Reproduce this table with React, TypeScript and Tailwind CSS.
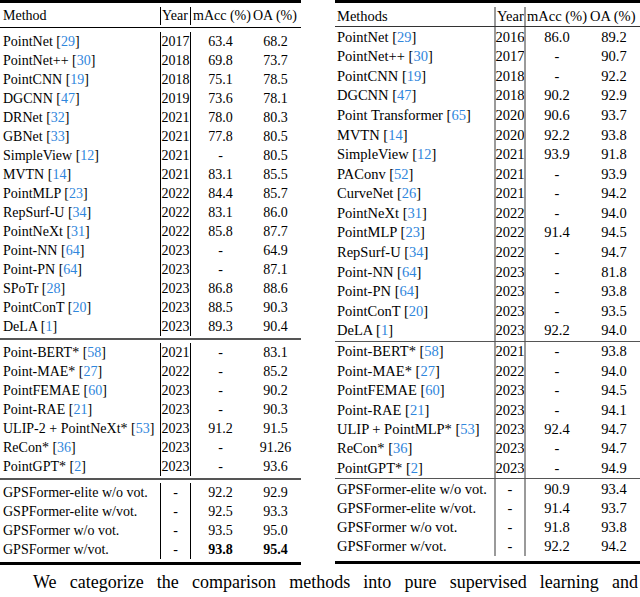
import React from 'react';

type Row = [string, string | null, string, string, string, boolean?];

const leftGroups: Row[][] = [
  [
    ['PointNet', '29', '2017', '63.4', '68.2'],
    ['PointNet++', '30', '2018', '69.8', '73.7'],
    ['PointCNN', '19', '2018', '75.1', '78.5'],
    ['DGCNN', '47', '2019', '73.6', '78.1'],
    ['DRNet', '32', '2021', '78.0', '80.3'],
    ['GBNet', '33', '2021', '77.8', '80.5'],
    ['SimpleView', '12', '2021', '-', '80.5'],
    ['MVTN', '14', '2021', '83.1', '85.5'],
    ['PointMLP', '23', '2022', '84.4', '85.7'],
    ['RepSurf-U', '34', '2022', '83.1', '86.0'],
    ['PointNeXt', '31', '2022', '85.8', '87.7'],
    ['Point-NN', '64', '2023', '-', '64.9'],
    ['Point-PN', '64', '2023', '-', '87.1'],
    ['SPoTr', '28', '2023', '86.8', '88.6'],
    ['PointConT', '20', '2023', '88.5', '90.3'],
    ['DeLA', '1', '2023', '89.3', '90.4'],
  ],
  [
    ['Point-BERT*', '58', '2021', '-', '83.1'],
    ['Point-MAE*', '27', '2022', '-', '85.2'],
    ['PointFEMAE', '60', '2023', '-', '90.2'],
    ['Point-RAE', '21', '2023', '-', '90.3'],
    ['ULIP-2 + PointNeXt*', '53', '2023', '91.2', '91.5'],
    ['ReCon*', '36', '2023', '-', '91.26'],
    ['PointGPT*', '2', '2023', '-', '93.6'],
  ],
  [
    ['GPSFormer-elite w/o vot.', null, '-', '92.2', '92.9'],
    ['GSPFormer-elite w/vot.', null, '-', '92.5', '93.3'],
    ['GPSFormer w/o vot.', null, '-', '93.5', '95.0'],
    ['GPSFormer w/vot.', null, '-', '93.8', '95.4', true],
  ],
];

const rightGroups: Row[][] = [
  [
    ['PointNet', '29', '2016', '86.0', '89.2'],
    ['PointNet++', '30', '2017', '-', '90.7'],
    ['PointCNN', '19', '2018', '-', '92.2'],
    ['DGCNN', '47', '2018', '90.2', '92.9'],
    ['Point Transformer', '65', '2020', '90.6', '93.7'],
    ['MVTN', '14', '2020', '92.2', '93.8'],
    ['SimpleView', '12', '2021', '93.9', '91.8'],
    ['PAConv', '52', '2021', '-', '93.9'],
    ['CurveNet', '26', '2021', '-', '94.2'],
    ['PointNeXt', '31', '2022', '-', '94.0'],
    ['PointMLP', '23', '2022', '91.4', '94.5'],
    ['RepSurf-U', '34', '2022', '-', '94.7'],
    ['Point-NN', '64', '2023', '-', '81.8'],
    ['Point-PN', '64', '2023', '-', '93.8'],
    ['PointConT', '20', '2023', '-', '93.5'],
    ['DeLA', '1', '2023', '92.2', '94.0'],
  ],
  [
    ['Point-BERT*', '58', '2021', '-', '93.8'],
    ['Point-MAE*', '27', '2022', '-', '94.0'],
    ['PointFEMAE', '60', '2023', '-', '94.5'],
    ['Point-RAE', '21', '2023', '-', '94.1'],
    ['ULIP + PointMLP*', '53', '2023', '92.4', '94.7'],
    ['ReCon*', '36', '2023', '-', '94.7'],
    ['PointGPT*', '2', '2023', '-', '94.9'],
  ],
  [
    ['GPSFormer-elite w/o vot.', null, '-', '90.9', '93.4'],
    ['GPSFormer-elite w/vot.', null, '-', '91.4', '93.7'],
    ['GPSFormer w/o vot.', null, '-', '91.8', '93.8'],
    ['GPSFormer w/vot.', null, '-', '92.2', '94.2'],
  ],
];

const Method: React.FC<{ name: string; cite: string | null }> = ({ name, cite }) => (
  <span className="whitespace-nowrap">
    {name}
    {cite && (
      <>
        {' '}[<span className="text-[#2f86dc]">{cite}</span>]
      </>
    )}
  </span>
);

const LeftRow: React.FC<{ row: Row }> = ({ row }) => {
  const [name, cite, year, macc, oa, bold] = row;
  return (
    <div className="grid h-[19px] grid-cols-[160px_30px_60px_51px] items-center">
      <div className="pl-[3px]">
        <Method name={name} cite={cite} />
      </div>
      <div className="flex h-full items-center justify-center border-l border-black">{year}</div>
      <div className={`flex h-full items-center justify-center border-l border-black ${bold ? 'font-bold' : ''}`}>{macc}</div>
      <div className={`text-center ${bold ? 'font-bold' : ''}`}>{oa}</div>
    </div>
  );
};

const RightRow: React.FC<{ row: Row; h: string }> = ({ row, h }) => {
  const [name, cite, year, macc, oa] = row;
  return (
    <div className={`grid grid-cols-[159px_30px_64px_52px] items-center ${h}`}>
      <div className="pl-[2px]">
        <Method name={name} cite={cite} />
      </div>
      <div className="flex h-full items-center justify-center border-l-2 border-[#9a9a9a]">{year}</div>
      <div className="flex h-full items-center justify-center border-l-2 border-[#9a9a9a]">{macc}</div>
      <div className="text-center">{oa}</div>
    </div>
  );
};

const LeftTable: React.FC = () => (
  <div className="w-[301px] text-[14px] leading-none">
    <div className="h-[3px] bg-black" />
    <div className="pt-[4px] pb-[2px]">
      <div className="grid h-[18px] grid-cols-[160px_30px_60px_51px] items-center">
        <div className="pl-[3px]">Method</div>
        <div className="flex h-full items-center border-l border-black pl-[1px]">Year</div>
        <div className="flex h-full items-center whitespace-nowrap border-l border-black pl-[2px]">mAcc (%)</div>
        <div className="whitespace-nowrap pl-[3px]">OA (%)</div>
      </div>
    </div>
    <div className="h-px bg-black" />
    <div className="pt-[4px] pb-[2px]">
      {leftGroups[0].map((r, i) => (
        <LeftRow key={i} row={r} />
      ))}
    </div>
    <div className="h-[2px] bg-[#555]" />
    <div className="pt-[3px] pb-[2px]">
      {leftGroups[1].map((r, i) => (
        <LeftRow key={i} row={r} />
      ))}
    </div>
    <div className="h-[2px] bg-[#555]" />
    <div className="pt-[3px] pb-[3px]">
      {leftGroups[2].map((r, i) => (
        <LeftRow key={i} row={r} />
      ))}
    </div>
    <div className="h-[3px] bg-black" />
  </div>
);

const RightTable: React.FC = () => (
  <div className="w-[305px] text-[14.5px] leading-none">
    <div className="h-[3px] bg-black" />
    <div className="pt-[4px]">
      <div className="grid h-[19px] grid-cols-[159px_30px_64px_52px] items-center">
        <div className="pl-[2px]">Methods</div>
        <div className="flex h-full items-center border-l-2 border-[#9a9a9a] pl-[1px]">Year</div>
        <div className="flex h-full items-center whitespace-nowrap border-l-2 border-[#9a9a9a] pl-[1px]">mAcc (%)</div>
        <div className="whitespace-nowrap pl-[2px]">OA (%)</div>
      </div>
    </div>
    <div className="h-px bg-[#333]" />
    <div>
      {rightGroups[0].map((r, i) => (
        <RightRow key={i} row={r} h="h-[19.6px]" />
      ))}
    </div>
    <div className="h-[1.5px] bg-[#555]" />
    <div>
      {rightGroups[1].map((r, i) => (
        <RightRow key={i} row={r} h="h-[19.4px]" />
      ))}
    </div>
    <div className="h-[1.5px] bg-[#555]" />
    <div className="pb-[5px]">
      {rightGroups[2].map((r, i) => (
        <RightRow key={i} row={r} h="h-[19.2px]" />
      ))}
    </div>
    <div className="h-[3px] bg-black" />
  </div>
);

const line1 = 'We categorize the comparison methods into pure supervised learning and'.split(' ');
const line2 = 'pre-training approaches. Table 1 shows that the proposed GPSFormer achieves'.split(' ');

export default function App() {
  return (
    <div className="h-[597px] w-[640px] overflow-hidden bg-white font-['Liberation_Serif',serif] text-black">
      <div className="flex gap-[34px]">
        <LeftTable />
        <RightTable />
      </div>
      <div className="mt-[6px] text-[18px] leading-[22px]">
        <div className="flex justify-between pl-[33px] pr-[2px]">
          {line1.map((w, i) => (
            <span key={i}>{w}</span>
          ))}
        </div>
        <div className="flex justify-between pr-[2px]">
          {line2.map((w, i) => (
            <span key={i}>{w}</span>
          ))}
        </div>
      </div>
    </div>
  );
}
